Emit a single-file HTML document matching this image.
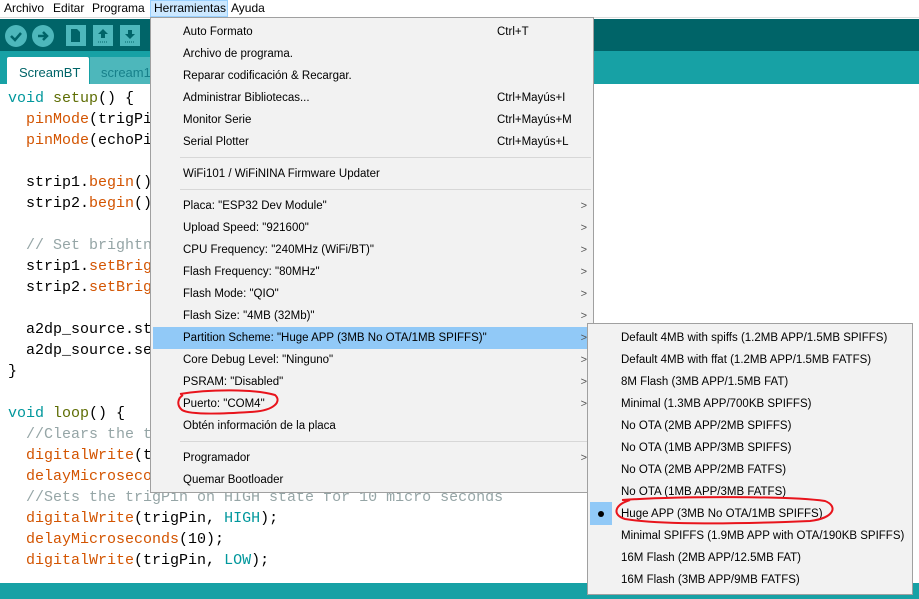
<!DOCTYPE html>
<html><head><meta charset="utf-8"><style>
*{margin:0;padding:0;box-sizing:border-box}
body{width:919px;height:599px;overflow:hidden;position:relative;background:#fff;font-family:"Liberation Sans",sans-serif;}
.abs{position:absolute}
.mb{left:0;top:0;width:919px;height:18px;background:#fff;font-size:12px;color:#000;border-bottom:1px solid #ddd}
.mb span{position:absolute;top:1px}
.code{font-family:"Liberation Mono",monospace;font-size:15px;color:#000;white-space:pre;line-height:21px}
.k{color:#00979c}.f{color:#5e6d03}.o{color:#d35400}.c{color:#95a5a6}
.menu{background:#f2f2f2;border:1px solid #a0a0a0;font-size:11.5px;color:#000}
.it{position:absolute;left:0;right:0;height:22px;line-height:22px;white-space:nowrap}
.it .t{position:absolute;left:32px}
.it .s{position:absolute;left:346px}
.it .a{position:absolute;right:6px;color:#555;font-size:11px}
.sep{position:absolute;left:29px;right:2px;height:1px;background:#d7d7d7}
.sm .it .t{left:33px}
</style></head><body>
<div class="abs mb">
<span style="left:4px">Archivo</span><span style="left:53px">Editar</span><span style="left:92px">Programa</span>
<span style="left:150px;top:0;height:17px;width:78px;background:#cce8ff;border:1px solid #99d1ff"></span>
<span style="left:154px">Herramientas</span><span style="left:231px">Ayuda</span>
</div>
<div class="abs" style="left:0;top:19px;width:919px;height:32px;background:#006468"></div>
<div class="abs" style="left:5px;top:25px;width:22px;height:22px;border-radius:50%;background:#4db7bb"></div>
<div class="abs" style="left:32px;top:25px;width:22px;height:22px;border-radius:50%;background:#4db7bb"></div>
<svg class="abs" style="left:0;top:19px" width="150" height="32">
<path d="M11 17l4 4 6-7" stroke="#006468" stroke-width="2.5" fill="none"/>
<path d="M38 17h8M43 13l4 4-4 4" stroke="#006468" stroke-width="2.5" fill="none"/>
<rect x="66" y="6" width="20" height="21" fill="#4db7bb"/><rect x="93" y="6" width="20" height="21" fill="#4db7bb"/><rect x="120" y="6" width="20" height="21" fill="#4db7bb"/>
<path d="M71 10h6l3 3v10h-9z" fill="#006468"/>
<path d="M103 10l-5 5h3v4h4v-4h3z" fill="#006468"/><path d="M98 23h10" stroke="#006468" stroke-dasharray="1 1"/>
<path d="M130 20l-5 -5h3v-4h4v4h3z" fill="#006468"/><path d="M125 23h10" stroke="#006468" stroke-dasharray="1 1"/>
</svg>
<div class="abs" style="left:0;top:51px;width:919px;height:33px;background:#17a1a5"></div>
<div class="abs" style="left:7px;top:57px;width:82px;height:27px;background:#fff;border-radius:2px 2px 0 0;font-size:13px;color:#006468;padding:8px 0 0 12px">ScreamBT</div>
<div class="abs" style="left:90px;top:57px;width:70px;height:27px;background:#4db7bb;font-size:13px;color:#17808a;padding:8px 0 0 11px">scream1</div>
<div class="abs code" style="left:8px;top:88px"><span class="k">void</span> <span class="f">setup</span>() {
  <span class="o">pinMode</span>(trigPi
  <span class="o">pinMode</span>(echoPi

  strip1.<span class="o">begin</span>()
  strip2.<span class="o">begin</span>()

  <span class="c">// Set brightn</span>
  strip1.<span class="o">setBrig</span>
  strip2.<span class="o">setBrig</span>

  a2dp_source.st
  a2dp_source.se
}

<span class="k">void</span> <span class="f">loop</span>() {
  <span class="c">//Clears the t</span>
  <span class="o">digitalWrite</span>(t
  <span class="o">delayMicroseco</span>
  <span class="c">//Sets the trigPin on HIGH state for 10 micro seconds</span>
  <span class="o">digitalWrite</span>(trigPin, <span class="k">HIGH</span>);
  <span class="o">delayMicroseconds</span>(10);
  <span class="o">digitalWrite</span>(trigPin, <span class="k">LOW</span>);</div>
<div class="abs" style="left:0;top:583px;width:919px;height:16px;background:#17a1a5"></div>
<div class="abs menu" style="left:150px;top:17px;width:444px;height:476px">
<div class="it" style="top:3px"><span class="t">Auto Formato</span><span class="s">Ctrl+T</span></div>
<div class="it" style="top:25px"><span class="t">Archivo de programa.</span></div>
<div class="it" style="top:47px"><span class="t">Reparar codificación &amp; Recargar.</span></div>
<div class="it" style="top:69px"><span class="t">Administrar Bibliotecas...</span><span class="s">Ctrl+Mayús+I</span></div>
<div class="it" style="top:91px"><span class="t">Monitor Serie</span><span class="s">Ctrl+Mayús+M</span></div>
<div class="it" style="top:113px"><span class="t">Serial Plotter</span><span class="s">Ctrl+Mayús+L</span></div>
<div class="sep" style="top:139px"></div>
<div class="it" style="top:145px"><span class="t">WiFi101 / WiFiNINA Firmware Updater</span></div>
<div class="sep" style="top:171px"></div>
<div class="it" style="top:177px"><span class="t">Placa: "ESP32 Dev Module"</span><span class="a">&gt;</span></div>
<div class="it" style="top:199px"><span class="t">Upload Speed: "921600"</span><span class="a">&gt;</span></div>
<div class="it" style="top:221px"><span class="t">CPU Frequency: "240MHz (WiFi/BT)"</span><span class="a">&gt;</span></div>
<div class="it" style="top:243px"><span class="t">Flash Frequency: "80MHz"</span><span class="a">&gt;</span></div>
<div class="it" style="top:265px"><span class="t">Flash Mode: "QIO"</span><span class="a">&gt;</span></div>
<div class="it" style="top:287px"><span class="t">Flash Size: "4MB (32Mb)"</span><span class="a">&gt;</span></div>
<div class="it" style="top:309px;left:2px;background:#91c9f7"><span class="t" style="left:30px">Partition Scheme: "Huge APP (3MB No OTA/1MB SPIFFS)"</span><span class="a">&gt;</span></div>
<div class="it" style="top:331px"><span class="t">Core Debug Level: "Ninguno"</span><span class="a">&gt;</span></div>
<div class="it" style="top:353px"><span class="t">PSRAM: "Disabled"</span><span class="a">&gt;</span></div>
<div class="it" style="top:375px"><span class="t">Puerto: "COM4"</span><span class="a">&gt;</span></div>
<div class="it" style="top:397px"><span class="t">Obtén información de la placa</span></div>
<div class="sep" style="top:423px"></div>
<div class="it" style="top:429px"><span class="t">Programador</span><span class="a">&gt;</span></div>
<div class="it" style="top:451px"><span class="t">Quemar Bootloader</span></div>
</div>
<div class="abs menu sm" style="left:587px;top:323px;width:326px;height:272px">
<div class="it" style="top:3px"><span class="t">Default 4MB with spiffs (1.2MB APP/1.5MB SPIFFS)</span></div>
<div class="it" style="top:25px"><span class="t">Default 4MB with ffat (1.2MB APP/1.5MB FATFS)</span></div>
<div class="it" style="top:47px"><span class="t">8M Flash (3MB APP/1.5MB FAT)</span></div>
<div class="it" style="top:69px"><span class="t">Minimal (1.3MB APP/700KB SPIFFS)</span></div>
<div class="it" style="top:91px"><span class="t">No OTA (2MB APP/2MB SPIFFS)</span></div>
<div class="it" style="top:113px"><span class="t">No OTA (1MB APP/3MB SPIFFS)</span></div>
<div class="it" style="top:135px"><span class="t">No OTA (2MB APP/2MB FATFS)</span></div>
<div class="it" style="top:157px"><span class="t">No OTA (1MB APP/3MB FATFS)</span></div>
<div class="abs" style="left:2px;top:178px;width:22px;height:23px;background:#91c9f7"></div>
<div class="abs" style="left:10px;top:187px;width:6px;height:6px;border-radius:50%;background:#000"></div>
<div class="it" style="top:179px"><span class="t">Huge APP (3MB No OTA/1MB SPIFFS)</span></div>
<div class="it" style="top:201px"><span class="t">Minimal SPIFFS (1.9MB APP with OTA/190KB SPIFFS)</span></div>
<div class="it" style="top:223px"><span class="t">16M Flash (2MB APP/12.5MB FAT)</span></div>
<div class="it" style="top:245px"><span class="t">16M Flash (3MB APP/9MB FATFS)</span></div>
</div>
<svg class="abs" style="left:0;top:0" width="919" height="599">
<path d="M180 394 C210 389,255 389,275 395 C282 401,275 411,250 412 C220 414,190 415,182 410 C176 405,178 398,183 395" stroke="#e8141c" stroke-width="2" fill="none"/>
<path d="M622 500 C680 496,790 496,825 501 C838 506,835 518,810 521 C740 524,660 525,625 519 C612 515,614 505,630 500" stroke="#e8141c" stroke-width="2" fill="none"/>
</svg>
</body></html>
